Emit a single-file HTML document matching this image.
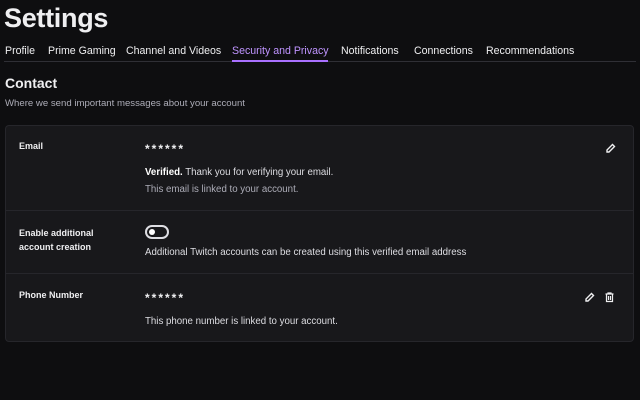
<!DOCTYPE html>
<html><head><style>
*{margin:0;padding:0;box-sizing:border-box}
body{width:640px;height:400px;background:#0e0e10;color:#efeff1;font-family:"Liberation Sans",sans-serif;position:relative;overflow:hidden}
.a{position:absolute;white-space:nowrap}
.t{font-size:10.6px;top:45px;color:#efeff1}
.b{font-weight:bold;font-size:9px}
.s{font-size:9.7px;color:#dedee3}
</style></head><body>
<div class="a" style="left:4px;top:3px;font-size:27px;font-weight:bold;letter-spacing:-0.3px">Settings</div>
<div class="a t" style="left:5px">Profile</div>
<div class="a t" style="left:48px">Prime Gaming</div>
<div class="a t" style="left:126px">Channel and Videos</div>
<div class="a t" style="left:232px;color:#bf94ff">Security and Privacy</div>
<div class="a t" style="left:341px">Notifications</div>
<div class="a t" style="left:414px">Connections</div>
<div class="a t" style="left:486px">Recommendations</div>
<div class="a" style="left:4px;top:61px;width:632px;height:1px;background:#2f2f35"></div>
<div class="a" style="left:232px;top:60px;width:96px;height:2px;background:#a970ff"></div>
<div class="a" style="left:5px;top:75px;font-size:14px;font-weight:bold">Contact</div>
<div class="a" style="left:5px;top:98px;font-size:9.6px;color:#adadb8">Where we send important messages about your account</div>
<div class="a" style="left:5px;top:125px;width:629px;height:217px;background:#18181b;border:1px solid #26262b;border-radius:4px"></div>
<div class="a" style="left:5px;top:210px;width:629px;height:1px;background:#26262b"></div>
<div class="a" style="left:5px;top:273px;width:629px;height:1px;background:#26262b"></div>
<div class="a b" style="left:19px;top:141px">Email</div>
<div class="a b" style="left:145px;top:142px;font-size:12px;letter-spacing:2px">******</div>
<div class="a s" style="left:145px;top:167px"><b style="color:#fff">Verified.</b> Thank you for verifying your email.</div>
<div class="a s" style="left:145px;top:184px;color:#adadb8">This email is linked to your account.</div>
<div class="a b" style="left:19px;top:226px;line-height:14px">Enable additional<br>account creation</div>
<div class="a" style="left:145px;top:225px;width:24px;height:14px;border:2px solid #dedee3;border-radius:7px"><div style="position:absolute;left:2px;top:2px;width:6px;height:6px;border-radius:3px;background:#fff"></div></div>
<div class="a s" style="left:145px;top:247px">Additional Twitch accounts can be created using this verified email address</div>
<div class="a b" style="left:19px;top:290px">Phone Number</div>
<div class="a b" style="left:145px;top:291px;font-size:12px;letter-spacing:2px">******</div>
<div class="a s" style="left:145px;top:316px">This phone number is linked to your account.</div>
<svg class="a" style="left:605px;top:143px" width="11" height="11" viewBox="0 0 11 11"><path d="M2 9 L2 7 L7.5 1.5 L9.5 3.5 L4 9 Z" fill="none" stroke="#efeff1" stroke-width="1.4"/></svg>
<svg class="a" style="left:584px;top:292px" width="11" height="11" viewBox="0 0 11 11"><path d="M2 9 L2 7 L7.5 1.5 L9.5 3.5 L4 9 Z" fill="none" stroke="#efeff1" stroke-width="1.4"/></svg>
<svg class="a" style="left:604px;top:292px" width="11" height="11" viewBox="0 0 11 11"><path d="M1.5 2 H9.5 M4 2 V1 H7 V2 M2.5 2.5 V9.5 H8.5 V2.5 M4.5 4 V8 M6.5 4 V8" fill="none" stroke="#efeff1" stroke-width="1.2"/></svg>
</body></html>
